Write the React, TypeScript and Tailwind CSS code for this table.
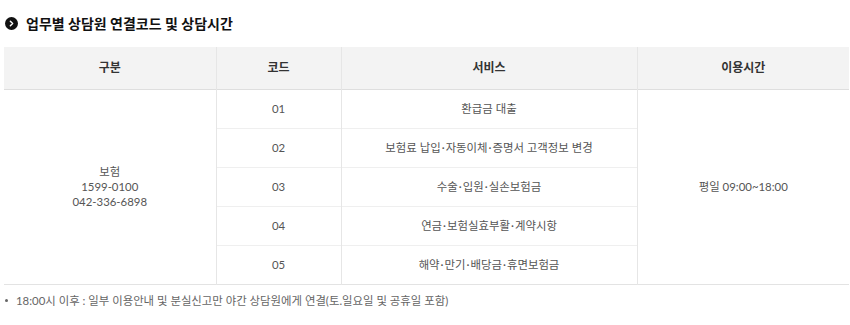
import { ChevronRight } from 'lucide-react'

const font = { fontFamily: 'Lato, "Noto Sans CJK KR", sans-serif' }

const services = [
  { code: '01', name: '환급금 대출' },
  { code: '02', name: '보험료 납입·자동이체·증명서 고객정보 변경' },
  { code: '03', name: '수술·입원·실손보험금' },
  { code: '04', name: '연금·보험실효부활·계약시항' },
  { code: '05', name: '해약·만기·배당금·휴면보험금' },
]

// spread the middle dots a little, like the original
function Dotted({ text }: { text: string }) {
  const parts = text.split('·')
  return (
    <>
      {parts.map((p, i) => (
        <span key={i}>
          {i > 0 && <span className="mx-[1px]">·</span>}
          {p}
        </span>
      ))}
    </>
  )
}

export default function App() {
  return (
    <div className="bg-white w-[850px] h-[325px] pt-[13px] px-[4px]" style={font}>
      {/* Title */}
      <h2 className="flex items-center gap-[8px] h-[20px] pl-[1px]">
        <span className="flex items-center justify-center w-[13px] h-[13px] rounded-full bg-[#111]">
          <ChevronRight className="w-[9px] h-[9px] text-white" strokeWidth={4} />
        </span>
        <span className="text-[14px] font-bold text-[#111]">업무별 상담원 연결코드 및 상담시간</span>
      </h2>

      {/* Table */}
      <table className="mt-[14px] w-[845px] border-collapse table-fixed text-[11.4px] text-[#555]">
        <colgroup>
          <col className="w-[212px]" />
          <col className="w-[125px]" />
          <col className="w-[296px]" />
          <col className="w-[212px]" />
        </colgroup>
        <thead>
          <tr className="bg-[#f3f3f3] h-[42px] border-b border-[#dedede] text-[12px]">
            <th className="font-bold text-[#333] border-r border-[#e6e6e6]">구분</th>
            <th className="font-bold text-[#333] border-r border-[#e6e6e6]">코드</th>
            <th className="font-bold text-[#333] border-r border-[#e6e6e6]">서비스</th>
            <th className="font-bold text-[#333]">이용시간</th>
          </tr>
        </thead>
        <tbody>
          {services.map((s, i) => (
            <tr key={s.code} className={`h-[39px] ${i === services.length - 1 ? 'border-b border-[#e3e3e3]' : ''}`}>
              {i === 0 && (
                <td rowSpan={5} className="text-center leading-[15px] border-r border-[#e6e6e6] align-middle">
                  보험
                  <br />
                  1599-0100
                  <br />
                  042-336-6898
                </td>
              )}
              <td className={`text-center border-r border-[#e6e6e6] ${i > 0 ? 'border-t border-t-[#efefef]' : ''}`}>{s.code}</td>
              <td className={`text-center border-r border-[#e6e6e6] ${i > 0 ? 'border-t border-t-[#efefef]' : ''}`}>
                <Dotted text={s.name} />
              </td>
              {i === 0 && (
                <td rowSpan={5} className="text-center align-middle">
                  평일 09:00~18:00
                </td>
              )}
            </tr>
          ))}
        </tbody>
      </table>

      {/* Note */}
      <ul className="mt-[7px]">
        <li className="flex items-center gap-[8px] text-[11.4px] text-[#666] pl-[1px]">
          <span className="w-[3px] h-[3px] rounded-full bg-[#666]" />
          18:00시 이후 : 일부 이용안내 및 분실신고만 야간 상담원에게 연결(토.일요일 및 공휴일 포함)
        </li>
      </ul>
    </div>
  )
}
